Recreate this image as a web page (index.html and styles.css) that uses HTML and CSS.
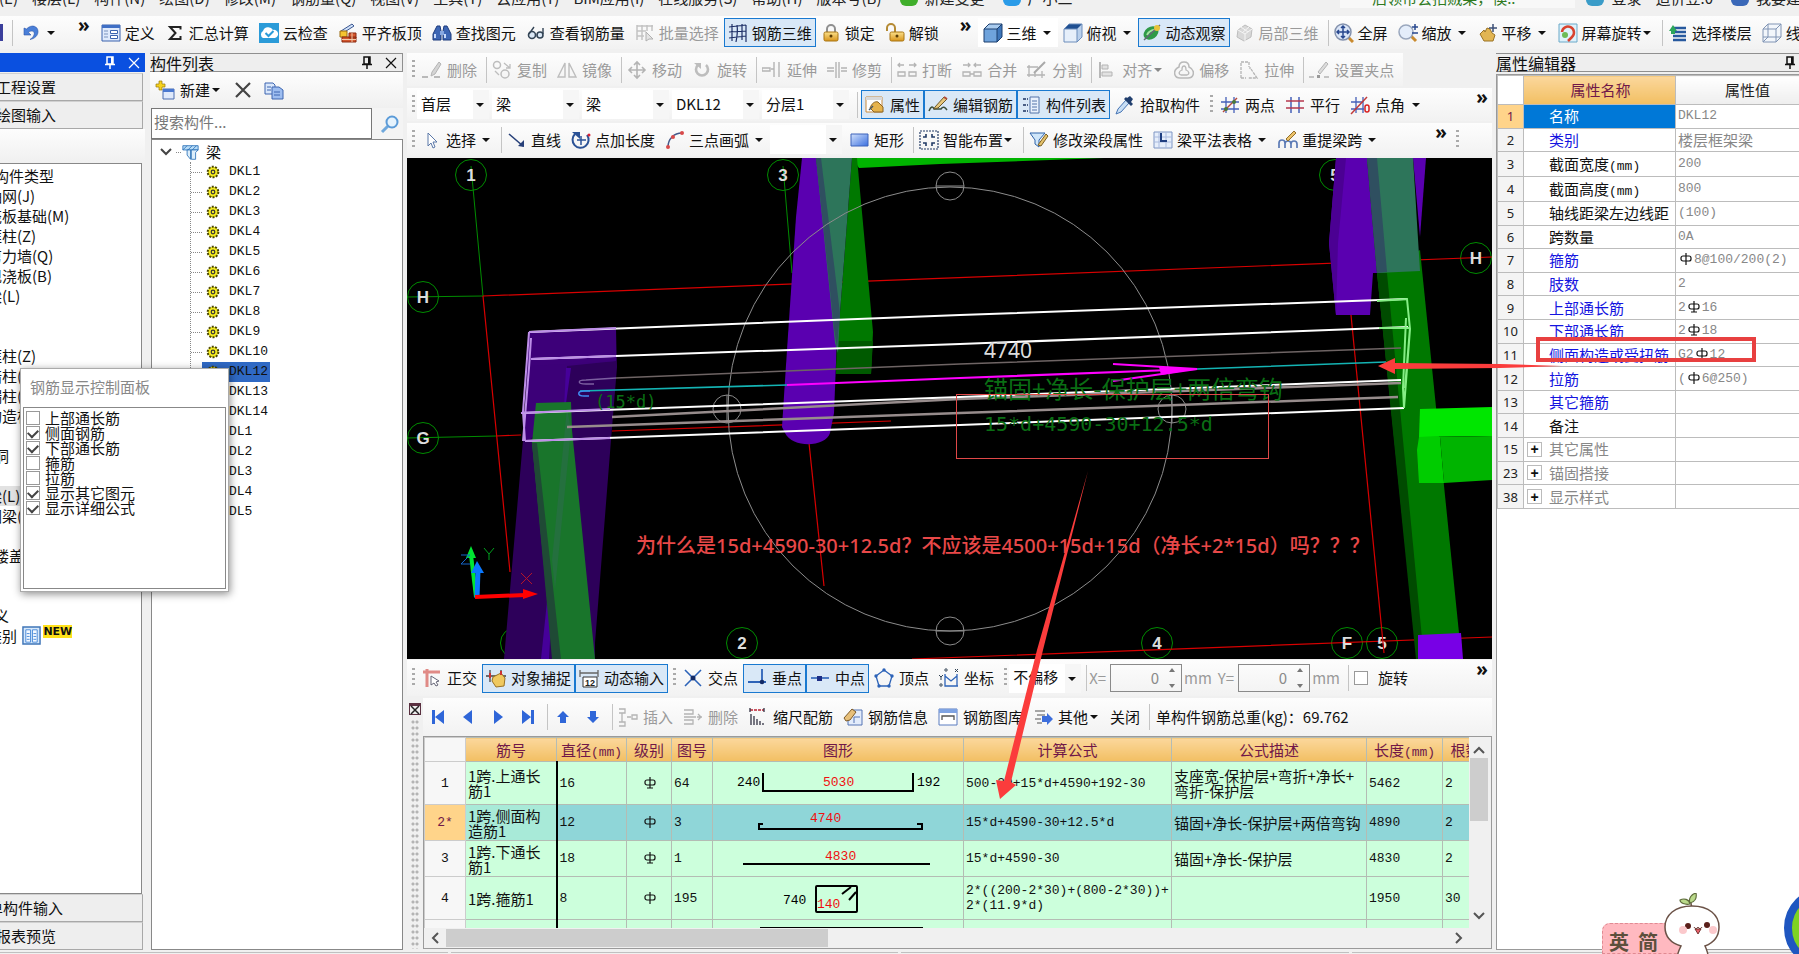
FILE: index.html
```html
<!DOCTYPE html>
<html lang="zh-CN">
<head>
<meta charset="utf-8">
<title>钢筋算量</title>
<link rel="stylesheet" href="styles.css">
</head>
<body>
<svg class="sprite" aria-hidden="true">
  <defs>
    <linearGradient id="gBlue" x1="0" y1="0" x2="1" y2="1"><stop offset="0" stop-color="#d3e2fb"/><stop offset="1" stop-color="#3a6fe0"/></linearGradient>
    <linearGradient id="gGold" x1="0" y1="0" x2="0" y2="1"><stop offset="0" stop-color="#fbe08a"/><stop offset="1" stop-color="#d8951c"/></linearGradient>
  </defs>
  <symbol id="undo" viewBox="0 0 20 20"><path d="M3 5v7h7l-2.500-2.500c3-3 7-1 5.500 2.500-.7 2-2 3-4 4.500 5-1 8-4 8-8 0-5-6-8-11.500-2.500z" fill="#4a7fd8" stroke="#2c55a8" stroke-width=".6"/></symbol>
  <symbol id="form" viewBox="0 0 20 20"><path d="M1 2h18v16H1z" fill="#dfeafc" stroke="#3b62ad"/><path d="M1 2h18v3H1z" fill="#3f6fc5"/><path d="M3 8h4M3 11h4M3 14h4" stroke="#7b93bd"/><path d="M9.500 7.500h7v3h-7zM9.500 12.500h7v3h-7z" fill="#fff" stroke="#3b62ad"/></symbol>
  <symbol id="sigma" viewBox="0 0 20 20"><path d="M15.500 6.500V4H5l5.500 6L5 16h10.500v-3" fill="none" stroke="#222" stroke-width="2"/></symbol>
  <symbol id="cloud" viewBox="0 0 20 20"><path d="M0 0h20v20H0z" fill="#2b9bd8"/><path d="M4 15a4 4 0 0 1 0-7 5.500 5.500 0 0 1 10-1 4 4 0 0 1 2 8z" fill="#fff"/><path d="M6.500 10l3 3 5-5" fill="none" stroke="#2b9bd8" stroke-width="2"/></symbol>
  <symbol id="slab" viewBox="0 0 20 20"><path d="M3 8L14 1l2 2L5 10z" fill="#cfe0f8" stroke="#3a5690"/><path d="M2 8h7v6H2z" fill="#f4c430" stroke="#9a6a10"/><path d="M4 14h14v5H4zM11 10h7v5h-7z" fill="#d4572e" stroke="#8a2a10"/><path d="M4 16.500h14M14 10v9" stroke="#f1c9a8"/></symbol>
  <symbol id="binoc" viewBox="0 0 20 20"><path d="M5 3h3l1 5v9H1v-6zM15 3h-3l-1 5v9h8v-6z" fill="#3d66b4" stroke="#1d3a7c"/><path d="M8 8h4v4H8z" fill="#88a8e0"/><path d="M3 11v4M13 11v4" stroke="#c8dafa" stroke-width="2"/></symbol>
  <symbol id="glasses" viewBox="0 0 20 20"><circle cx="6" cy="12" r="3.500" fill="#dbe8f5" stroke="#345" stroke-width="1.600"/><circle cx="14" cy="12" r="3" fill="#dbe8f5" stroke="#345" stroke-width="1.600"/><path d="M3 11l5-7M17 11V5" stroke="#345" stroke-width="1.400" fill="none"/></symbol>
  <symbol id="batch" viewBox="0 0 20 20"><path d="M2 2v15M2 3h16M2 8h9M2 13h7M7 2v15M12 2v6M17 2v6" stroke="#c3c3c3" stroke-width="1.500"/><path d="M11 9l7 7-4 0-3 2z" fill="#e4e4e4" stroke="#b0b0b0"/></symbol>
  <symbol id="mesh" viewBox="0 0 20 20"><path d="M4 1v17M9 2c1 6 0 12-1 17M14 1v16M18 2v17M1 4l17-2M1 9l17-1M1 15l17-2" stroke="#1e2f66" stroke-width="1.200" fill="none"/></symbol>
  <symbol id="lock" viewBox="0 0 20 20"><path d="M6 10V6a4 4 0 0 1 8 0v4" fill="none" stroke="#8f8f8f" stroke-width="2"/><rect x="3" y="9" width="14" height="9" rx="1.500" fill="url(#gGold)" stroke="#a87412"/><circle cx="10" cy="13" r="1.500" fill="#5b3d05"/></symbol>
  <symbol id="unlock" viewBox="0 0 20 20"><path d="M2 8V5a4 4 0 0 1 8 0v4" fill="none" stroke="#b58b35" stroke-width="2"/><rect x="5" y="9" width="14" height="9" rx="1.500" fill="url(#gGold)" stroke="#a87412"/><circle cx="12" cy="13" r="1.500" fill="#5b3d05"/></symbol>
  <symbol id="cube" viewBox="0 0 20 20"><path d="M1 6h13v13H1z" fill="#6fa3dc"/><path d="M1 6l5-5h13l-5 5z" fill="#a9cbee"/><path d="M14 6l5-5v13l-5 5z" fill="#3f77ba"/><path d="M1 6l5-5h13v13l-5 5H1zM1 6h13v13M14 6l5-5" fill="none" stroke="#1c3f6f"/></symbol>
  <symbol id="cubetop" viewBox="0 0 20 20"><path d="M1 6h13v13H1z" fill="#e6effa"/><path d="M1 6l5-5h13l-5 5z" fill="#1f4f91"/><path d="M14 6l5-5v13l-5 5z" fill="#b9d0ec"/><path d="M1 6l5-5h13v13l-5 5H1zM1 6h13v13M14 6l5-5" fill="none" stroke="#6c8dbb"/></symbol>
  <symbol id="cubewire" viewBox="0 0 20 20"><path d="M1 6l5-5h13v13l-5 5H1zM1 6h13v13M14 6l5-5M6 1v13H1M6 14h13M6 14l-5 5" fill="#f2f6fb" stroke="#8094b4"/></symbol>
  <symbol id="orbit" viewBox="0 0 20 20"><ellipse cx="9" cy="10" rx="8" ry="6" transform="rotate(-35 9 10)" fill="#2f9a48"/><path d="M5 12c2-4 5-5 8-5" stroke="#a4e2a0" stroke-width="2" fill="none"/><path d="M2 17L18 2" stroke="#667" stroke-width="1.500"/><circle cx="15" cy="5" r="3" fill="#e8c33a"/></symbol>
  <symbol id="orbitg" viewBox="0 0 20 20"><path d="M10 2l7 4-1 8-7 4-7-4 1-7z" fill="#d8d8d8" stroke="#bdbdbd"/><path d="M3 7l7 4 7-5M10 11v7M6 4l7 5M14 4l-7 6" stroke="#f6f6f6" fill="none"/></symbol>
  <symbol id="fit" viewBox="0 0 20 20"><path d="M14 14l5 5" stroke="#c98a2e" stroke-width="3"/><circle cx="9" cy="9" r="8" fill="#dbe6f8" stroke="#8391ad" stroke-width="1.500"/><path d="M9 3v12M3 9h12M7 5l2-2 2 2M7 13l2 2 2-2M5 7L3 9l2 2M13 7l2 2-2 2" stroke="#28488f" stroke-width="1.500" fill="none"/></symbol>
  <symbol id="zoom" viewBox="0 0 20 20"><path d="M12 12l6 6" stroke="#c98a2e" stroke-width="3"/><circle cx="8" cy="9" r="7" fill="#e4edfa" stroke="#9aa7bd" stroke-width="1.500"/><path d="M17 1v6M14 4h6M14 10h6" stroke="#28488f" stroke-width="1.500"/></symbol>
  <symbol id="pan" viewBox="0 0 20 20"><path d="M2 11l4-4 1 2 2-4 3 1 2 4 3 2-2 6H6z" fill="#e2b552" stroke="#9a7224"/><path d="M15 1v8M11 5h8" stroke="#3c4f76" stroke-width="1.500"/></symbol>
  <symbol id="rot" viewBox="0 0 20 20"><path d="M1 1h18v18H1z" fill="#dff1fb" stroke="#6aa9c8"/><path d="M4 9a6 6 0 1 1 10 5l-4 4" stroke="#d8432f" stroke-width="2.500" fill="none"/><circle cx="7" cy="12" r="3" fill="#6dbb56"/></symbol>
  <symbol id="floors" viewBox="0 0 20 20"><path d="M5 5h13M5 9h13M5 13h13M5 17h13" stroke="#27599e" stroke-width="2.400"/><path d="M1 8l4-6 4 6H7v3H3V8z" fill="#2ca65a"/></symbol>
  <symbol id="g-del" viewBox="0 0 20 20"><path d="M10 12l7-10 2 2-6 10-4 2z" fill="#d4d4d4" stroke="#b4b4b4"/><path d="M0 17h6M12 17h6" stroke="#b9b9b9" stroke-width="2"/></symbol>
  <symbol id="g-copy" viewBox="0 0 20 20"><circle cx="5" cy="5" r="3.500" fill="none" stroke="#bdbdbd" stroke-width="1.500"/><circle cx="13" cy="14" r="4" fill="none" stroke="#bdbdbd" stroke-width="1.500"/><path d="M12 3l6 5M18 4v4h-4M3 11l4 4" stroke="#bdbdbd" fill="none" stroke-width="1.300"/></symbol>
  <symbol id="g-mirror" viewBox="0 0 20 20"><path d="M8 3v14H1zM12 3v14h7z" fill="none" stroke="#bdbdbd" stroke-width="1.400"/></symbol>
  <symbol id="g-move" viewBox="0 0 20 20"><path d="M10 2v16M2 10h16M7 5l3-3 3 3M7 15l3 3 3-3M5 7l-3 3 3 3M15 7l3 3-3 3" stroke="#b4b4b4" stroke-width="1.600" fill="none"/></symbol>
  <symbol id="g-rotate" viewBox="0 0 20 20"><path d="M6 5a6 6 0 1 0 8 0" stroke="#bdbdbd" stroke-width="2.600" fill="none"/><path d="M2 3h7v6z" fill="#bdbdbd"/></symbol>
  <symbol id="g-extend" viewBox="0 0 20 20"><path d="M0 8h8v3H0zM12 2v15M17 2v15M9 9h3" stroke="#b4b4b4" stroke-width="1.400" fill="none"/></symbol>
  <symbol id="g-trim" viewBox="0 0 20 20"><path d="M0 8h7M0 11h7M14 8h6M14 11h6M9 2v16M12 2v16" stroke="#b4b4b4" stroke-width="1.400"/></symbol>
  <symbol id="g-break" viewBox="0 0 20 20"><path d="M1 5h6M12 5h7M3 3L1 5l2 2M17 3l2 2-2 2M1 12h7v4H1zM12 12h7v4h-7z" stroke="#b4b4b4" stroke-width="1.300" fill="none"/></symbol>
  <symbol id="g-join" viewBox="0 0 20 20"><path d="M1 5h7M12 5h7M6 3l2 2-2 2M14 3l-2 2 2 2M1 12h7v4H1zM12 12h7v4h-7zM8 14h4" stroke="#b4b4b4" stroke-width="1.300" fill="none"/></symbol>
  <symbol id="g-split" viewBox="0 0 20 20"><path d="M0 7h11M0 15h18M2 5v12M8 13v4M15 11v7" stroke="#b4b4b4" stroke-width="1.300"/><path d="M7 13L18 2" stroke="#a8a8a8" stroke-width="2"/></symbol>
  <symbol id="g-align" viewBox="0 0 20 20"><path d="M3 2v16" stroke="#a8a8a8" stroke-width="1.600"/><path d="M5 5h6v4H5zM5 12h10v4H5z" fill="#e2e2e2" stroke="#b4b4b4"/></symbol>
  <symbol id="g-offset" viewBox="0 0 20 20"><path d="M10 2c3 0 5 2 5 5 4 2 5 5 4 8-1 3-3 3-5 3H6c-2 0-4 0-5-3-1-3 0-6 4-8 0-3 2-5 5-5z" fill="none" stroke="#b9b9b9" stroke-width="1.500"/><path d="M10 6c2 0 2 2 2 4 3 1 4 4 1 5H7c-3-1-2-4 1-5 0-2 0-4 2-4z" fill="none" stroke="#b9b9b9" stroke-width="1.300"/></symbol>
  <symbol id="g-stretch" viewBox="0 0 20 20"><path d="M2 18V2h8v5M2 18h5M12 9l6 9H9M11 7v2" fill="none" stroke="#b4b4b4" stroke-width="1.300" stroke-dasharray="3 1"/></symbol>
  <symbol id="g-grip" viewBox="0 0 20 20"><path d="M0 17h5M15 17h5" stroke="#b4b4b4" stroke-width="1.500"/><path d="M9 12l8-10 2 2-8 10z" fill="#dcdcdc" stroke="#b4b4b4"/><path d="M8 15h3v3H8z" fill="#999"/></symbol>
  <symbol id="prop" viewBox="0 0 20 20"><path d="M1 2h16v15H1z" fill="#fff" stroke="#c98a3a"/><path d="M1 2h16v3H1z" fill="#d9d9d9"/><path d="M5 13c2-5 5-7 8-6l5 5v5H9z" fill="#e6b34c" stroke="#8a6222"/><path d="M4 15l4-4" stroke="#456" stroke-width="1.500"/></symbol>
  <symbol id="editbar" viewBox="0 0 20 20"><path d="M1 16c2-5 4-5 5-2h7c2-3 4-2 6 1" fill="none" stroke="#3c4f3c" stroke-width="1.500"/><path d="M7 12L16 2l3 2-9 9-4 1z" fill="#e7c77c" stroke="#6d5a2a"/><path d="M16 2l3 2" stroke="#b34a3a" stroke-width="2"/></symbol>
  <symbol id="list" viewBox="0 0 20 20"><path d="M9 2h9v16H9z" fill="#e9f1fc" stroke="#5272a8"/><path d="M11 6h5M11 9h5M11 12h5M11 15h5" stroke="#5272a8"/><path d="M2 4h3M2 10h3M2 16h3M6 4h1M6 10h1M6 16h1" stroke="#4a5f86" stroke-width="2"/></symbol>
  <symbol id="dropper" viewBox="0 0 20 20"><path d="M11 5L3 14l-2 5 5-2 8-9z" fill="#c9dff5" stroke="#4775b4"/><path d="M9 4l7 7 2-2-2-2 2-3-3-3-3 2-1-1z" fill="#22406f"/></symbol>
  <symbol id="twopt" viewBox="0 0 20 20"><path d="M6 2v16M14 2v16M1 7h18M1 14h18" stroke="#4660b8" stroke-width="1.300"/><path d="M3 17L17 3" stroke="#b5483e" stroke-width="1.500"/><circle cx="6" cy="14" r="2" fill="#477a3c"/><circle cx="14" cy="7" r="2" fill="#477a3c"/></symbol>
  <symbol id="para" viewBox="0 0 20 20"><path d="M6 2v16M14 2v16" stroke="#4660b8" stroke-width="1.500"/><path d="M1 6h18M1 13h18" stroke="#b5384e" stroke-width="1.500"/></symbol>
  <symbol id="angle" viewBox="0 0 20 20"><path d="M6 2v16M13 2v16M1 7h12M1 14h13" stroke="#4660b8" stroke-width="1.300"/><path d="M1 19L17 2" stroke="#c23a3a" stroke-width="1.500"/><rect x="15" y="10" width="4" height="7" rx="2" fill="none" stroke="#d82020" stroke-width="1.500"/></symbol>
  <symbol id="cursor" viewBox="0 0 20 20"><path d="M6 3v13l3-3 2 5 2-1-2-5h4z" fill="#fff" stroke="#5b78a8"/></symbol>
  <symbol id="line" viewBox="0 0 20 20"><path d="M2 4l14 12" stroke="#263f78" stroke-width="1.600"/><path d="M17 17v-7l-6 6z" fill="#263f78"/></symbol>
  <symbol id="ptlen" viewBox="0 0 20 20"><path d="M4 4a8 8 0 1 0 12 1" stroke="#2b5296" stroke-width="2" fill="none"/><path d="M1 2h8v7z" fill="#2b5296"/><path d="M10 6v9M6 10h9" stroke="#2b5296" stroke-width="1.500"/><circle cx="18" cy="5" r="1.500" fill="#d23"/></symbol>
  <symbol id="arc" viewBox="0 0 20 20"><path d="M3 17C3 9 9 3 17 3" stroke="#44598a" stroke-width="1.500" fill="none"/><circle cx="3" cy="17" r="2" fill="#d84a4a"/><circle cx="8" cy="7" r="2" fill="#d84a4a"/><circle cx="17" cy="3" r="2" fill="#d84a4a"/></symbol>
  <symbol id="rect" viewBox="0 0 20 20"><path d="M1 4h17v12H1z" fill="url(#gBlue)" stroke="#3c63ba"/></symbol>
  <symbol id="smart" viewBox="0 0 20 20"><path d="M1 1h18v18H1z" fill="none" stroke="#223b66" stroke-width="1.200" stroke-dasharray="2 1"/><path d="M4 7h3V4M13 4v3h3M4 13h3v3M13 16v-3h3" fill="none" stroke="#223b66" stroke-width="1.600"/></symbol>
  <symbol id="segprop" viewBox="0 0 20 20"><path d="M1 3h15l-6 7v7l-4-3v-4z" fill="#cfe6fa" stroke="#2f62a8"/><path d="M9 15L17 4l2 2-7 10z" fill="#e5c26b" stroke="#7a5f22"/></symbol>
  <symbol id="grid" viewBox="0 0 20 20"><path d="M1 2h18v16H1z" fill="#e6eefb" stroke="#7e96c4"/><path d="M1 7h18M1 12h18M6 2v16M13 2v16" stroke="#a9bade"/><path d="M8 3v8h6" stroke="#1f3e80" stroke-width="2" fill="none"/></symbol>
  <symbol id="respan" viewBox="0 0 20 20"><path d="M1 18v-5c0-4 6-4 6 0v5M7 14c0-4 6-4 6 0v4M13 14c0-4 6-4 6 0v4" fill="none" stroke="#5b7ab5" stroke-width="1.700"/><path d="M8 9l8-8 2 2-8 8z" fill="#ecc26a" stroke="#93702a"/></symbol>
  <symbol id="ortho" viewBox="0 0 20 20"><path d="M1 4h17M5 1v18" stroke="#e08a86" stroke-width="3"/><path d="M9 8v9l3-2 2 3 2-1-2-3 3-1z" fill="#fff" stroke="#667"/></symbol>
  <symbol id="snap" viewBox="0 0 20 20"><path d="M0 8h20M4 2v12M15 2v12" stroke="#444" stroke-width="1.300"/><path d="M7 9l8-4 4 5-1 8-8 1-4-6z" fill="#efc960" stroke="#9a7224"/><path d="M4 5v5M15 3v4" stroke="#c33" stroke-width="2"/></symbol>
  <symbol id="dyn" viewBox="0 0 20 20"><path d="M1 2v7M19 2v7M1 5h18" stroke="#666" stroke-width="1.300"/><path d="M4 9h14v10H4z" fill="#fff" stroke="#333"/><text x="11" y="18" text-anchor="middle" font-size="9" font-weight="700" font-family="Liberation Sans, sans-serif" fill="#222">12</text></symbol>
  <symbol id="cross" viewBox="0 0 20 20"><path d="M2 2l16 16M18 2L2 18" stroke="#2d63b8" stroke-width="1.600"/><circle cx="10" cy="10" r="2.500" fill="#122a66"/></symbol>
  <symbol id="perp" viewBox="0 0 20 20"><path d="M1 14h18M15 1v13" stroke="#2d63b8" stroke-width="1.800"/><circle cx="15" cy="14" r="2.300" fill="#122a66"/></symbol>
  <symbol id="mid" viewBox="0 0 20 20"><path d="M1 10h18" stroke="#2d63b8" stroke-width="1.600"/><rect x="7" y="8" width="5" height="5" fill="#1d2f86"/></symbol>
  <symbol id="vertex" viewBox="0 0 20 20"><path d="M10 2l8 6-3 10H5L2 8z" fill="none" stroke="#2d63b8" stroke-width="1.300"/><g fill="#2d63b8"><circle cx="10" cy="2" r="1.700"/><circle cx="18" cy="8" r="1.700"/><circle cx="15" cy="18" r="1.700"/><circle cx="5" cy="18" r="1.700"/><circle cx="2" cy="8" r="1.700"/></g></symbol>
  <symbol id="coord" viewBox="0 0 20 20"><path d="M6 6v12h13M6 8l6 5 6-5M18 6v12" fill="none" stroke="#2d63b8" stroke-width="1.300"/><g fill="none" stroke="#345"><circle cx="7" cy="2" r="1.200"/><circle cx="2" cy="17" r="1.200"/></g><path d="M0 7l2 2v3M4 7L2 9M16 1l3 3M19 1l-3 3" stroke="#345" fill="none"/></symbol>
  <symbol id="first" viewBox="0 0 20 20"><path d="M4 3h3v14H4zM16 3v14l-9-7z" fill="#2f66d8"/></symbol>
  <symbol id="prev" viewBox="0 0 20 20"><path d="M14 3v14l-9-7z" fill="#2f66d8"/></symbol>
  <symbol id="next" viewBox="0 0 20 20"><path d="M6 3v14l9-7z" fill="#2f66d8"/></symbol>
  <symbol id="last" viewBox="0 0 20 20"><path d="M13 3h3v14h-3zM4 3v14l9-7z" fill="#2f66d8"/></symbol>
  <symbol id="up" viewBox="0 0 20 20"><path d="M10 4l6 6h-3v6H7v-6H4z" fill="#2f66d8"/></symbol>
  <symbol id="down" viewBox="0 0 20 20"><path d="M10 16l6-6h-3V4H7v6H4z" fill="#2f66d8"/></symbol>
  <symbol id="g-ins" viewBox="0 0 20 20"><path d="M1 2h6v4H1M1 15h6v4H1M4 6v9M9 10h4M14 8h5v4h-5z" fill="none" stroke="#b4b4b4" stroke-width="1.300"/></symbol>
  <symbol id="g-rem" viewBox="0 0 20 20"><path d="M1 3h9v4H1M1 13h9v4H1M1 10h12M14 10h5M15 7l3 3-3 3" fill="none" stroke="#b4b4b4" stroke-width="1.300"/></symbol>
  <symbol id="scale" viewBox="0 0 20 20"><path d="M2 3h14" stroke="#b23" stroke-width="1.300" stroke-dasharray="3 1"/><path d="M2 1v4M16 1v4M3 7v11M6 9v9M9 12v6M12 14v4M15 16v2" stroke="#334" stroke-width="1.300"/></symbol>
  <symbol id="barinfo" viewBox="0 0 20 20"><path d="M9 3h10v15H5v-5z" fill="#e3ecfb" stroke="#5474b4"/><path d="M11 10h6M11 10v6" stroke="#5474b4"/><path d="M1 11L9 2l4 3-6 8-4 1z" fill="#e7c07a" stroke="#7c5a28"/></symbol>
  <symbol id="barlib" viewBox="0 0 20 20"><path d="M1 2h18v16H1z" fill="#fff" stroke="#5a7cc0"/><path d="M1 2h18v4H1z" fill="#7fa3e2"/><path d="M4 13V9h12v4" fill="none" stroke="#555" stroke-width="1.300"/></symbol>
  <symbol id="other" viewBox="0 0 20 20"><path d="M2 4h10M4 8h8M2 12h6M4 16h5" stroke="#555" stroke-width="1.200"/><path d="M9 9h5V6l6 6-6 6v-3H9z" fill="#3d6edc"/></symbol>
  <symbol id="new" viewBox="0 0 20 20"><path d="M8 9h11v10H8z" fill="#dfe9fb" stroke="#4a6cb0"/><path d="M8 9h11v3H8z" fill="#4a78d0"/><path d="M4 1h3v3h3v3H7v3H4V7H1V4h3z" fill="#f6d21e" stroke="#97790c" stroke-width=".7"/></symbol>
  <symbol id="delx" viewBox="0 0 20 20"><path d="M3 3l14 14M17 3L3 17" stroke="#444" stroke-width="2.200"/></symbol>
  <symbol id="copy" viewBox="0 0 20 20"><path d="M1 3h8l2 2v9H1z" fill="#d9e7fb" stroke="#3c65b0"/><path d="M8 7h7l4 3v9H8z" fill="#9dbdf0" stroke="#3c65b0"/><path d="M3 7h4M3 10h4M10 12h6M10 15h6" stroke="#3c65b0"/></symbol>
  <symbol id="search" viewBox="0 0 20 20"><path d="M8 12l-6 6" stroke="#6fa8dc" stroke-width="3"/><circle cx="12" cy="8" r="5.500" fill="#e6f3fd" stroke="#5b9bd8" stroke-width="2"/></symbol>
  <symbol id="pin" viewBox="0 0 12 14"><path d="M3 1h6v7H3zM1 8.500h10M6 9v4" fill="none" stroke="currentColor" stroke-width="1.500"/><path d="M7 1h2v7H7z" fill="currentColor"/></symbol>
  <symbol id="x" viewBox="0 0 12 12"><path d="M1 1l10 10M11 1L1 11" stroke="currentColor" stroke-width="1.200"/></symbol>
  <symbol id="beam" viewBox="0 0 20 20"><path d="M1 2h18v5H1z" fill="#b7dcf8" stroke="#2d72b8"/><path d="M1 7l5-5M6 8l6-6M12 7l5-5" stroke="#2d72b8"/><path d="M6 7h4v11l-4-5zM11 7h8l-3 3v8h-5z" fill="#dceefb" stroke="#2d72b8"/></symbol>
  <symbol id="gear" viewBox="0 0 14 14"><circle cx="7" cy="7" r="5.300" fill="#e8e018" stroke="#4a4600" stroke-width="2" stroke-dasharray="2 1.300"/><circle cx="7" cy="7" r="4" fill="#f2ea20"/><circle cx="7" cy="7" r="1.800" fill="none" stroke="#333" stroke-width="1.200"/></symbol>
  <symbol id="r1" viewBox="0 0 12 12"><rect x="1" y="3" width="10" height="5" rx="2" fill="none" stroke="currentColor" stroke-width="1.200"/><path d="M6 0v12" stroke="currentColor" stroke-width="1.200"/></symbol>
  <symbol id="r3" viewBox="0 0 12 12"><rect x="1" y="3" width="10" height="5" rx="2" fill="none" stroke="currentColor" stroke-width="1.200"/><path d="M6 0v11M3 11h6" fill="none" stroke="currentColor" stroke-width="1.200"/></symbol>
</svg>

<div class="app">
  <nav class="menu">
    <div class="menu-line">
      <a href="#">编辑(E)</a><a href="#">楼层(L)</a><a href="#">构件(N)</a><a href="#">绘图(D)</a><a href="#">修改(M)</a><a href="#">钢筋量(Q)</a><a href="#">视图(V)</a><a href="#">工具(T)</a><a href="#">云应用(Y)</a><a href="#">BIM应用(I)</a><a href="#">在线服务(S)</a><a href="#">帮助(H)</a><a href="#">版本号(B)</a>
      <a href="#"><i class="dot green"></i>新建变更</a><a href="#"><i class="dot blue"></i>广小二</a>
      <span class="notice">后领币会招贼果，懊..</span>
      <span class="account"><a href="#"><i class="dot sky"></i>登录</a><a href="#">造价豆:0</a><a href="#"><i class="dot navy"></i>我要建议</a></span>
    </div>
  </nav>

  <div class="bar top close-set">
    <i class="save"></i><i class="sep"></i>
    <button class="t undo" aria-label="撤销"><svg class="i"><use href="#undo"/></svg><i class="caret"></i></button>
    <span class="more lead">»</span>
    <button class="t"><svg class="i"><use href="#form"/></svg>定义</button>
    <button class="t"><svg class="i"><use href="#sigma"/></svg>汇总计算</button>
    <button class="t"><svg class="i"><use href="#cloud"/></svg>云检查</button>
    <button class="t"><svg class="i"><use href="#slab"/></svg>平齐板顶</button>
    <button class="t"><svg class="i"><use href="#binoc"/></svg>查找图元</button>
    <button class="t"><svg class="i"><use href="#glasses"/></svg>查看钢筋量</button>
    <button class="t off"><svg class="i"><use href="#batch"/></svg>批量选择</button>
    <button class="t on"><svg class="i"><use href="#mesh"/></svg>钢筋三维</button>
    <button class="t"><svg class="i"><use href="#lock"/></svg>锁定</button>
    <button class="t"><svg class="i"><use href="#unlock"/></svg>解锁</button>
    <span class="more mid">»</span>
    <button class="t white"><svg class="i"><use href="#cube"/></svg>三维<i class="caret"></i></button>
    <button class="t"><svg class="i"><use href="#cubetop"/></svg>俯视<i class="caret"></i></button>
    <button class="t on"><svg class="i"><use href="#orbit"/></svg>动态观察</button>
    <button class="t off"><svg class="i"><use href="#orbitg"/></svg>局部三维</button>
    <i class="sep"></i>
    <button class="t"><svg class="i"><use href="#fit"/></svg>全屏</button>
    <button class="t"><svg class="i"><use href="#zoom"/></svg>缩放<i class="caret"></i></button>
    <button class="t"><svg class="i"><use href="#pan"/></svg>平移<i class="caret"></i></button>
    <button class="t"><svg class="i"><use href="#rot"/></svg>屏幕旋转<i class="caret tight"></i></button>
    <i class="sep"></i>
    <button class="t"><svg class="i"><use href="#floors"/></svg>选择楼层</button>
    <button class="t"><svg class="i"><use href="#cubewire"/></svg>线框</button>
  </div>

  <div class="work">
    <aside class="nav">
      <header class="nav-head"><svg class="pin"><use href="#pin"/></svg><svg class="close"><use href="#x"/></svg></header>
      <button class="nav-btn">工程设置</button>
      <button class="nav-btn">绘图输入</button>
      <div class="nav-strip"></div>
      <ul class="nav-list">
        <li class="in1">构件类型</li><li>轴网(J)</li><li>筏板基础(M)</li><li>框柱(Z)</li><li>剪力墙(Q)</li><li>现浇板(B)</li><li>梁(L)</li>
        <li></li><li></li><li>框柱(Z)</li><li>暗柱(Z)</li><li>端柱(Z)</li><li>构造柱(Z)</li><li></li><li class="in1">洞</li><li></li>
        <li class="hot">梁(L)</li><li>圈梁(E)</li><li></li><li class="in1">楼盖</li><li></li><li></li><li class="in1">义</li>
        <li>类别 <svg class="book" viewBox="0 0 20 20"><path d="M1 1h18v18H1z" fill="#d6e8fb" stroke="#3f75b8" stroke-width="1.500"/><path d="M4 4h5v13H4zM11 4h5v13h-5z" fill="#f4f9ff" stroke="#4a8ad8"/><path d="M5 8h3M12 8h3M5 11h3M12 11h3M5 14h3M12 14h3" stroke="#4a8ad8"/></svg><b class="new">NEW</b></li>
      </ul>
      <button class="nav-btn deep">单构件输入</button>
      <button class="nav-btn">报表预览</button>
    </aside>

    <section class="comp">
      <header class="head">构件列表<svg class="pin"><use href="#pin"/></svg><svg class="close"><use href="#x"/></svg></header>
      <div class="comp-bar">
        <button class="t"><svg class="i"><use href="#new"/></svg>新建<i class="caret tight"></i></button>
        <button class="t icon" aria-label="删除"><svg class="i"><use href="#delx"/></svg></button>
        <button class="t icon" aria-label="复制"><svg class="i"><use href="#copy"/></svg></button>
      </div>
      <div class="find"><input type="text" placeholder="搜索构件..." aria-label="搜索构件"><button aria-label="搜索"><svg class="i"><use href="#search"/></svg></button></div>
      <div class="tree">
        <div class="root"><svg class="chev" viewBox="0 0 12 8"><path d="M1 1l5 5 5-5" fill="none" stroke="#444" stroke-width="2"/></svg><i class="stub"></i><svg class="i16"><use href="#beam"/></svg>梁</div>
        <ul>
          <li><span><svg><use href="#gear"/></svg>DKL1</span></li><li><span><svg><use href="#gear"/></svg>DKL2</span></li><li><span><svg><use href="#gear"/></svg>DKL3</span></li><li><span><svg><use href="#gear"/></svg>DKL4</span></li><li><span><svg><use href="#gear"/></svg>DKL5</span></li><li><span><svg><use href="#gear"/></svg>DKL6</span></li><li><span><svg><use href="#gear"/></svg>DKL7</span></li><li><span><svg><use href="#gear"/></svg>DKL8</span></li><li><span><svg><use href="#gear"/></svg>DKL9</span></li><li><span><svg><use href="#gear"/></svg>DKL10</span></li><li class="sel"><span><svg><use href="#gear"/></svg>DKL12</span></li><li><span><svg><use href="#gear"/></svg>DKL13</span></li><li><span><svg><use href="#gear"/></svg>DKL14</span></li><li><span><svg><use href="#gear"/></svg>DL1</span></li><li><span><svg><use href="#gear"/></svg>DL2</span></li><li><span><svg><use href="#gear"/></svg>DL3</span></li><li><span><svg><use href="#gear"/></svg>DL4</span></li><li><span><svg><use href="#gear"/></svg>DL5</span></li>
        </ul>
      </div>
    </section>

    <main class="center">
      <div class="bar fit">
        <i class="grip"></i>
        <button class="t off"><svg class="i"><use href="#g-del"/></svg>删除</button><i class="sep"></i>
        <button class="t off"><svg class="i"><use href="#g-copy"/></svg>复制</button>
        <button class="t off"><svg class="i"><use href="#g-mirror"/></svg>镜像</button><i class="sep"></i>
        <button class="t off"><svg class="i"><use href="#g-move"/></svg>移动</button>
        <button class="t off"><svg class="i"><use href="#g-rotate"/></svg>旋转</button><i class="sep"></i>
        <button class="t off"><svg class="i"><use href="#g-extend"/></svg>延伸</button>
        <button class="t off"><svg class="i"><use href="#g-trim"/></svg>修剪</button><i class="sep"></i>
        <button class="t off"><svg class="i"><use href="#g-break"/></svg>打断</button>
        <button class="t off"><svg class="i"><use href="#g-join"/></svg>合并</button>
        <button class="t off"><svg class="i"><use href="#g-split"/></svg>分割</button><i class="sep"></i>
        <button class="t off"><svg class="i"><use href="#g-align"/></svg>对齐<i class="caret tight"></i></button>
        <button class="t off"><svg class="i"><use href="#g-offset"/></svg>偏移</button>
        <button class="t off"><svg class="i"><use href="#g-stretch"/></svg>拉伸</button><i class="sep"></i>
        <button class="t off"><svg class="i"><use href="#g-grip"/></svg>设置夹点</button>
      </div>
      <div class="bar">
        <i class="grip"></i>
        <span class="combo short"><select aria-label="楼层"><option>首层</option></select></span>
        <span class="combo"><select aria-label="构件大类"><option>梁</option></select></span>
        <span class="combo"><select aria-label="构件类型"><option>梁</option></select></span>
        <span class="combo"><select aria-label="构件"><option>DKL12</option></select></span>
        <span class="combo"><select aria-label="分层"><option>分层1</option></select></span>
        <i class="sep wide"></i>
        <button class="t on"><svg class="i"><use href="#prop"/></svg>属性</button>
        <button class="t on"><svg class="i"><use href="#editbar"/></svg>编辑钢筋</button>
        <button class="t on"><svg class="i"><use href="#list"/></svg>构件列表</button>
        <button class="t"><svg class="i"><use href="#dropper"/></svg>拾取构件</button>
        <i class="grip"></i>
        <button class="t"><svg class="i"><use href="#twopt"/></svg>两点</button>
        <button class="t"><svg class="i"><use href="#para"/></svg>平行</button>
        <button class="t"><svg class="i"><use href="#angle"/></svg>点角<i class="caret"></i></button>
        <span class="more end">»</span>
      </div>
      <div class="bar close-set">
        <i class="grip"></i>
        <button class="t"><svg class="i"><use href="#cursor"/></svg>选择<i class="caret"></i></button><i class="sep"></i>
        <button class="t"><svg class="i"><use href="#line"/></svg>直线</button>
        <button class="t"><svg class="i"><use href="#ptlen"/></svg>点加长度</button>
        <button class="t"><svg class="i"><use href="#arc"/></svg>三点画弧<i class="caret"></i></button>
        <span class="combo short"><select aria-label="画弧参数"><option></option></select></span>
        <button class="t"><svg class="i"><use href="#rect"/></svg>矩形</button><i class="sep"></i>
        <button class="t"><svg class="i"><use href="#smart"/></svg>智能布置<i class="caret tight"></i></button><i class="sep"></i>
        <button class="t"><svg class="i"><use href="#segprop"/></svg>修改梁段属性</button>
        <button class="t"><svg class="i"><use href="#grid"/></svg>梁平法表格<i class="caret"></i></button>
        <button class="t"><svg class="i"><use href="#respan"/></svg>重提梁跨<i class="caret"></i></button>
        <span class="more far">»</span><i class="grip"></i>
      </div>

      <div class="view">
        <svg viewBox="0 0 1085 501" preserveAspectRatio="xMidYMid slice">
          <path d="M0 0h1085v501H0z" fill="#000"/>
          <g fill="none" stroke="#008c00">
            <circle cx="64" cy="17" r="15.500"/><circle cx="376" cy="17" r="15.500"/><circle cx="928" cy="17" r="15.500"/>
            <circle cx="16" cy="139" r="15.500"/><circle cx="16" cy="280" r="15.500"/><circle cx="1069" cy="100" r="15.500"/>
            <circle cx="109" cy="485" r="15.500"/><circle cx="335" cy="485" r="15.500"/><circle cx="750" cy="485" r="15.500"/><circle cx="940" cy="485" r="15.500"/><circle cx="975" cy="485" r="15.500"/>
            <path d="M64 8l12 130L0 139M0 280l89-2M376 8l9 107"/>
          </g>
          <path d="M76 138L1085 99M76 138L103 414M89 278l25-1M205 273l279-10M505 501l580-22" fill="none" stroke="#d80000" stroke-width="1.200"/>
          <g class="axis">
            <text x="64" y="17">1</text><text x="376" y="17">3</text><text x="928" y="17">5</text><text x="16" y="139">H</text><text x="16" y="280">G</text><text x="1069" y="100">H</text><text x="335" y="485">2</text><text x="750" y="485">4</text><text x="940" y="485">F</text><text x="975" y="485">5</text>
          </g>
          <path d="M402 285l15 143" stroke="#d80000" stroke-width="1.200"/>
          <path d="M445 0h252l-164 6-81 4z" fill="#00b400"/>
          <path d="M122 174l87-4 1 39-6 73-16 203v16H97l19-219z" fill="#2d005a"/>
          <path d="M122 174l87-4v33l-49 5-1 40-37 34-5 0z" fill="#3c0078"/>
          <path d="M122 174l87-4v33l-85 5z" fill="#3d0079"/>
          <path d="M154 280l10-70-5 0-5 100-20 191h8z" fill="#46009a"/>
          <path d="M129 245l35-1 1 28 23 229h-42L125 285z" fill="#19752b"/>
          <path d="M125 285l5 0 24 216h-9z" fill="#1f4a35"/>
          <path d="M160 250l4 22-16 160-3-30z" fill="#24703e"/>
          <path d="M395 0h14l22 155-4 100-4 20c-4 14-37 16-45 0l-3-6 5-77 9-133z" fill="#5a00b0"/>
          <path d="M445 0h5l16 174-2 42h-35l4-61z" fill="#007800"/>
          <path d="M430 183h36l-2 33h-35z" fill="#005a00"/>
          <path d="M409 0h36l-12 155-2 40-3-10z" fill="#2d755a"/>
          <path d="M409 0h5l19 155-3 35-3-20z" fill="#2f4f60"/>
          <path d="M1006 0h13l-6 79z" fill="#5a00b0"/>
          <path d="M929 0h31l10 115h-4l-3 42h-34l-7-72z" fill="#5a00b0"/><path d="M929 0h10l-8 85-2 72-7-72z" fill="#4b0093"/>
          <path d="M970 115l43-23 39 383-2 26h-40z" fill="#007800"/>
          <path d="M970 115h10l37 386h-8z" fill="#004b00"/>
          <path d="M960 0h46l7 113-43 2z" fill="#2d755a"/><path d="M960 0h10l10 114-10 1z" fill="#2f4f60"/>
          <path d="M1013 251l72-2v29l-73 1z" fill="#00e600"/><path d="M1012 279h21l4 46h-25l-2-33z" fill="#00cc00"/><path d="M1033 279l52-1v44l-48 3z" fill="#00b400"/>
          <path d="M1011 477l43-2 2 26h-45z" fill="#7800e6"/>
          <path d="M944 157l33 338" stroke="#d80000" stroke-width="1.200"/>
          <g fill="none" stroke="#8c8c8c"><circle cx="543" cy="251" r="222"/><circle cx="543" cy="28" r="14"/><circle cx="543" cy="473" r="14"/><circle cx="320" cy="251" r="14"/><circle cx="765" cy="251" r="14"/><path d="M529 28h28M529 473h28M320 237v28M765 237v28"/></g>
          <g fill="none">
            <path d="M209 220L553 206L994 190" stroke="#6e6464" stroke-width="1.500"/><path d="M209 220l-30 2c-9 0-9 4 0 4h8" stroke="#7c5fa0" stroke-width="1.300"/>
            <path d="M173 233l207-6M790 211l189-7" stroke="#14b4b4" stroke-width="1.600"/><path d="M183 233h-6c-7 0-7 5 0 5h5" stroke="#3f8cf0" stroke-width="1.500"/>
            <path d="M160 269L553 255L991 239M205 259L553 241L994 225" stroke="#978c8c" stroke-width="2.500"/>
            <path d="M122 174L553 157L1000 141M124 201L553 186L1001 169M114 255L553 239L994 222M118 283L553 267L997 250" stroke="#fff" stroke-width="2"/>
            <path d="M122 174l-6 80 2 29M124 180l-2 30-6 73M122 174l87-4M124 201l85-3M114 255l89-4M118 283l85-3" stroke="#bd8ee8" stroke-width="2"/>
            <path d="M970 143l30-2 3 30-6 79M999 160l-3 70 1 20M1003 170l-5 60M972 170h30" stroke="#85ee85" stroke-width="2"/>
            <path d="M380 227L553 220L790 211" stroke="#f0f" stroke-width="2.200"/><path d="M706 206l84 5-84 12" stroke="#f0f" stroke-width="2.200"/>
          </g>
          <path d="M752 209l38 2-36 6z" fill="#f0f"/>
          <text x="577" y="192" class="dim">4740</text>
          <text x="188" y="244" class="formula small">(15*d)</text>
          <text x="577" y="229" class="desc">锚固+净长-保护层+两倍弯钩</text>
          <text x="577" y="266" class="formula">15*d+4590-30+12.5*d</text>
          <path d="M69 439L64 397" stroke="#00e632" stroke-width="4"/><path d="M64 388l5 12h-10z" fill="#00e632"/>
          <path d="M70 440l1-28" stroke="#0a78ff" stroke-width="5"/><path d="M70 403l7 12H64z" fill="#0a78ff"/>
          <path d="M68 439l50-2" stroke="#f00" stroke-width="4"/><path d="M131 436l-15-5v10z" fill="#f00"/>
          <path d="M77 390l5 6 5-6M82 396v6" stroke="#00a01e" fill="none"/><path d="M54 397h9l-9 9h9" stroke="#1464c8" fill="none"/><path d="M114 415l11 11M125 415l-11 11" stroke="#b41428" fill="none"/>
        </svg>
      </div>

      <div class="bar snap">
        <i class="grip"></i>
        <button class="t"><svg class="i"><use href="#ortho"/></svg>正交</button>
        <button class="t on"><svg class="i"><use href="#snap"/></svg>对象捕捉</button>
        <button class="t on"><svg class="i"><use href="#dyn"/></svg>动态输入</button>
        <i class="grip"></i>
        <button class="t"><svg class="i"><use href="#cross"/></svg>交点</button>
        <button class="t on"><svg class="i"><use href="#perp"/></svg>垂点</button>
        <button class="t on"><svg class="i"><use href="#mid"/></svg>中点</button>
        <button class="t"><svg class="i"><use href="#vertex"/></svg>顶点</button>
        <button class="t"><svg class="i"><use href="#coord"/></svg>坐标</button>
        <i class="grip"></i>
        <span class="combo short"><select aria-label="偏移方式"><option>不偏移</option></select></span><i class="sep flush"></i>
        <label class="off" for="ox">X=</label><span class="num"><input id="ox" type="text" value="0"><i></i></span><span class="off unit">mm</span>
        <label class="off" for="oy">Y=</label><span class="num"><input id="oy" type="text" value="0"><i></i></span><span class="off unit">mm</span><i class="sep flush"></i>
        <label class="turn"><input type="checkbox">旋转</label>
        <span class="more end">»</span>
      </div>

      <section class="rebar">
        <div class="edge"><svg viewBox="0 0 12 12"><path d="M0 0h12v12H0z" fill="#5a3040"/><path d="M1 3h10v8H1z" fill="#eee"/><path d="M2 3l8 8M10 3l-8 8" stroke="#222" stroke-width="1.500"/></svg><i></i></div>
        <div class="rebar-body">
          <div class="bar">
            <button class="t nav-i" aria-label="首条"><svg class="i"><use href="#first"/></svg></button><button class="t nav-i" aria-label="上一条"><svg class="i"><use href="#prev"/></svg></button><button class="t nav-i" aria-label="下一条"><svg class="i"><use href="#next"/></svg></button><button class="t nav-i" aria-label="末条"><svg class="i"><use href="#last"/></svg></button><i class="sep"></i>
            <button class="t nav-i" aria-label="上移"><svg class="i"><use href="#up"/></svg></button><button class="t nav-i" aria-label="下移"><svg class="i"><use href="#down"/></svg></button><i class="sep"></i>
            <button class="t off"><svg class="i"><use href="#g-ins"/></svg>插入</button>
            <button class="t off"><svg class="i"><use href="#g-rem"/></svg>删除</button>
            <button class="t"><svg class="i"><use href="#scale"/></svg>缩尺配筋</button>
            <button class="t"><svg class="i"><use href="#barinfo"/></svg>钢筋信息</button>
            <button class="t"><svg class="i"><use href="#barlib"/></svg>钢筋图库</button>
            <button class="t"><svg class="i"><use href="#other"/></svg>其他<i class="caret tight"></i></button>
            <button class="t">关闭</button><i class="sep"></i>
            <span class="total">单构件钢筋总重(kg)：69.762</span>
          </div>
          <div class="sheet">
            <div class="clip">
              <table>
                <colgroup><col class="c-n"><col class="c-name"><col class="c-d"><col class="c-g"><col class="c-t"><col><col class="c-f"><col class="c-e"><col class="c-l"><col class="c-q"></colgroup>
                <thead><tr><td></td><th>筋号</th><th>直径<span class="m">(mm)</span></th><th>级别</th><th>图号</th><th>图形</th><th>计算公式</th><th>公式描述</th><th>长度<span class="m">(mm)</span></th><th>根数</th></tr></thead>
                <tbody>
                  <tr class="tall"><th>1</th><td class="name">1跨.上通长筋1</td><td>16</td><td class="c"><svg class="r"><use href="#r3"/></svg></td><td>64</td>
                    <td class="fig"><svg width="250" height="42"><path d="M50 11v18h150V11" class="bar-line"/><text x="24" y="20">240</text><text x="204" y="20">192</text><text x="110" y="20" class="red">5030</text></svg></td>
                    <td>500-30+15*d+4590+192-30</td><td class="cjk">支座宽-保护层+弯折+净长+<br>弯折-保护层</td><td>5462</td><td>2</td></tr>
                  <tr class="active"><th>2*</th><td class="name">1跨.侧面构造筋1</td><td>12</td><td class="c"><svg class="r"><use href="#r1"/></svg></td><td>3</td>
                    <td class="fig"><svg width="250" height="35"><path d="M50 19h-4v5h163v-5h-5" class="bar-line"/><text x="97" y="13" class="red">4740</text></svg></td>
                    <td>15*d+4590-30+12.5*d</td><td class="cjk">锚固+净长-保护层+两倍弯钩</td><td>4890</td><td>2</td></tr>
                  <tr><th>3</th><td class="name">1跨.下通长筋1</td><td>18</td><td class="c"><svg class="r"><use href="#r3"/></svg></td><td>1</td>
                    <td class="fig"><svg width="250" height="35"><path d="M30 23h187" class="bar-line"/><text x="112" y="15" class="red">4830</text></svg></td>
                    <td>15*d+4590-30</td><td class="cjk">锚固+净长-保护层</td><td>4830</td><td>2</td></tr>
                  <tr class="tall"><th>4</th><td class="name">1跨.箍筋1</td><td>8</td><td class="c"><svg class="r"><use href="#r1"/></svg></td><td>195</td>
                    <td class="fig"><svg width="250" height="42"><rect x="103" y="9" width="41" height="26" rx="1" class="bar-line"/><path d="M129 17l9-7M136 23l7-8" class="bar-line"/><text x="70" y="23">740</text><text x="104" y="27" class="red">140</text></svg></td>
                    <td>2*((200-2*30)+(800-2*30))+<br>2*(11.9*d)</td><td></td><td>1950</td><td>30</td></tr>
                  <tr class="tall"><th></th><td class="name"></td><td></td><td></td><td></td><td class="fig"><svg width="250" height="42"><path d="M48 20V8h161v12" class="bar-line"/></svg></td><td></td><td></td><td></td><td></td></tr>
                </tbody>
              </table>
            </div>
            <div class="vscroll"><svg viewBox="0 0 12 8"><path d="M1 7l5-5 5 5"/></svg><i></i><svg viewBox="0 0 12 8"><path d="M1 1l5 5 5-5"/></svg></div>
            <div class="hscroll"><svg viewBox="0 0 8 12"><path d="M7 1L2 6l5 5"/></svg><i></i><svg viewBox="0 0 8 12"><path d="M1 1l5 5-5 5"/></svg></div>
          </div>
        </div>
      </section>
    </main>

    <section class="props">
      <header class="head">属性编辑器<svg class="pin"><use href="#pin"/></svg></header>
      <div class="props-box">
      <table>
        <colgroup><col class="p-n"><col class="p-name"><col></colgroup>
        <thead><tr><td></td><th class="gold">属性名称</th><th>属性值</th></tr></thead>
        <tbody>
          <tr class="cur"><th>1</th><td>名称</td><td>DKL12</td></tr>
          <tr class="b"><th>2</th><td>类别</td><td class="cjk">楼层框架梁</td></tr>
          <tr><th>3</th><td>截面宽度<span class="m">(mm)</span></td><td>200</td></tr>
          <tr><th>4</th><td>截面高度<span class="m">(mm)</span></td><td>800</td></tr>
          <tr><th>5</th><td>轴线距梁左边线距</td><td>(100)</td></tr>
          <tr><th>6</th><td>跨数量</td><td>0A</td></tr>
          <tr class="b"><th>7</th><td>箍筋</td><td><svg class="r"><use href="#r1"/></svg>8@100/200(2)</td></tr>
          <tr class="b"><th>8</th><td>肢数</td><td>2</td></tr>
          <tr class="b"><th>9</th><td>上部通长筋</td><td>2<svg class="r"><use href="#r3"/></svg>16</td></tr>
          <tr class="b"><th>10</th><td>下部通长筋</td><td>2<svg class="r"><use href="#r3"/></svg>18</td></tr>
          <tr class="b"><th>11</th><td>侧面构造或受扭筋</td><td>G2<svg class="r"><use href="#r1"/></svg>12</td></tr>
          <tr class="b"><th>12</th><td>拉筋</td><td>(<svg class="r"><use href="#r1"/></svg>6@250)</td></tr>
          <tr class="b"><th>13</th><td>其它箍筋</td><td></td></tr>
          <tr><th>14</th><td>备注</td><td></td></tr>
          <tr class="g"><th>15</th><td><button>+</button>其它属性</td><td></td></tr>
          <tr class="g"><th>23</th><td><button>+</button>锚固搭接</td><td></td></tr>
          <tr class="g"><th>38</th><td><button>+</button>显示样式</td><td></td></tr>
        </tbody>
      </table>
      </div>
    </section>
  </div>
  <footer class="status"><i></i><i></i><i></i><i></i></footer>
</div>

<div class="dialog" role="dialog" aria-labelledby="dlg">
  <h2 id="dlg">钢筋显示控制面板</h2>
  <div class="checks">
    <label><input type="checkbox">上部通长筋</label>
    <label><input type="checkbox" checked>侧面钢筋</label>
    <label><input type="checkbox" checked>下部通长筋</label>
    <label><input type="checkbox">箍筋</label>
    <label><input type="checkbox">拉筋</label>
    <label><input type="checkbox" checked>显示其它图元</label>
    <label><input type="checkbox" checked>显示详细公式</label>
  </div>
</div>

<svg class="notes" viewBox="0 0 1799 954">
  <rect x="956.500" y="394.500" width="312" height="64" fill="none" stroke="#e04848"/>
  <text x="636" y="545" dominant-baseline="central">为什么是15d+4590-30+12.5d？不应该是4500+15d+15d（净长+2*15d）吗？？？</text>
  <path d="M1088 471l-45 179-32 132 5 3-16 14-4-19 8 1 33-131z" fill="#fb3c3c"/>
  <path d="M1378 366l17-8v5l105 1 62 2-62 2-105 1v5z" fill="#fb3c3c"/>
  <rect x="1538" y="339" width="216" height="21" fill="none" stroke="#e84040" stroke-width="4"/>
</svg>

<div class="ime"><span>英</span><span>简</span></div>
<svg class="mascot" viewBox="0 0 60 66">
  <path d="M29 18l-1-8" stroke="#6b5247" stroke-width="1.500"/><path d="M27 11c-5 1-10-1-10-4 4-2 9-1 10 4zM27 10c-2-5 2-9 6-10 1 5-1 9-6 10z" fill="#b9d98a" stroke="#5e6b3c" stroke-width="1.200"/>
  <path d="M35 13c17 0 27 9 27 21 0 10-6 16-14 19 2 4 3 8 4 13H20c0-5 2-9 4-13C14 50 8 44 8 34c0-12 10-21 27-21z" transform="translate(-6 0)" fill="#fff" stroke="#6b5247" stroke-width="1.500"/>
  <circle cx="25" cy="33" r="3" fill="#5a1f1a"/><circle cx="44" cy="32" r="3" fill="#5a1f1a"/><circle cx="20" cy="37" r="4" fill="#fbc9cc"/><circle cx="50" cy="37" r="4" fill="#fbc9cc"/>
  <path d="M31 34c1 2 3 2 4 0 1 2 3 2 4 0" fill="none" stroke="#5a1f1a"/><path d="M32 36h6l-3 5z" fill="#e8606a" stroke="#5a1f1a" stroke-width=".8"/>
</svg>
<div class="ball"></div>
</body>
</html>
```

FILE: styles.css
```css
* { box-sizing: border-box; }
body {
  margin: 0;
  overflow: hidden;
  background: #f0f0f0;
  color: #111;
  font: 15px/20px "Noto Sans CJK SC", sans-serif;
}
button, input, select { font: inherit; color: inherit; margin: 0; }
ul { list-style: none; margin: 0; padding: 0; }
.sprite { position: absolute; width: 0; height: 0; }
.app { height: 100vh; display: flex; flex-direction: column; overflow: hidden; }

/* menu */
.menu { flex: none; height: 16px; overflow: hidden; background: #f0f0f0; }
.menu-line { display: flex; margin: -12px 0 0 -38px; white-space: nowrap; }
.menu a { color: #222; text-decoration: none; padding: 0 7px; display: flex; gap: 7px; }
.dot { width: 18px; height: 18px; border-radius: 6px; margin-left: 4px; }
.dot.green { background: #3fae2a; }
.dot.blue { background: #2a9be8; }
.dot.sky { background: #3a9cc8; }
.dot.navy { background: #3a68b8; }
.notice { color: #2f7a1e; margin-left: auto; padding: 0 60px 0 32px; background: #f8f8f8; }
.account { display: flex; margin-right: -24px; }

/* toolbars */
.bar {
  flex: none;
  height: 33px;
  display: flex;
  align-items: center;
  background: linear-gradient(#fdfdfd, #f2f2f2);
  white-space: nowrap;
  overflow: hidden;
}
.bar.top { margin-bottom: 4px; }
.bar.fit { align-self: flex-start; padding-right: 4px; }
.t {
  flex: none;
  display: flex;
  align-items: center;
  gap: 5px;
  height: 29px;
  padding: 0 4px;
  border: 1px solid transparent;
  background: none;
}
.close-set .t { gap: 4px; }
.t.on { background: #d9e8f7; border-color: #1979d0; padding: 0 3px; }
.t.white { background: #fff; }
.off { color: #9a9a9a; }
.i { width: 20px; height: 20px; flex: none; }
.caret { width: 12px; display: flex; justify-content: center; }
.caret::before, .combo::after {
  content: "";
  border: 4px solid transparent;
  border-top-color: #111;
  border-bottom: 0;
}
.off .caret::before { border-top-color: #888; }
.caret.tight { margin-left: -5px; }
.sep { flex: none; width: 1px; height: 26px; background: #c4c4c4; margin-left: 4px; }
.sep.wide { margin: 0 3px 0 5px; }
.sep.flush { margin-left: 2px; }
.grip {
  flex: none;
  width: 3px;
  height: 20px;
  margin: 0 2px 0 5px;
  background: repeating-linear-gradient(#aaa 0 2px, transparent 2px 5px);
}
.more { font: 700 19px/18px "Noto Sans", sans-serif; align-self: flex-start; }
.more.lead { margin: 0 6px 0 16px; }
.more.mid { margin: 0 6px 0 16px; }
.more.end { margin-left: auto; padding-right: 4px; }
.more.far { margin-left: 52px; padding-right: 4px; }
.save { flex: none; width: 3px; height: 17px; background: #3b3f9c; margin-right: 5px; }
.undo { margin-left: 3px; }

.combo { position: relative; flex: none; width: 87px; height: 29px; margin-right: 3px; }
.combo.short { width: 72px; }
.combo::after { position: absolute; right: 5px; top: 13px; pointer-events: none; }
.combo select {
  appearance: none;
  width: 100%;
  height: 100%;
  border: 0;
  padding: 0 16px 2px 4px;
  background: linear-gradient(90deg, #fff calc(100% - 16px), #f6f6f6 0);
}

/* workspace */
.work {
  flex: 1;
  min-height: 0;
  display: grid;
  grid-template-columns: 145px 253px minmax(0, 1fr) 303px;
  grid-template-rows: minmax(0, 1fr);
}
.work > * { min-width: 0; min-height: 0; }
.comp { margin-left: 5px; margin-right: -5px; }
.center { margin: 0 4px 0 9px; }

.head {
  display: flex;
  align-items: center;
  height: 19px;
  font-size: 16px;
  border: 1px solid #8f8f8f;
  border-left: 0;
  background: #eee;
}
.pin { width: 12px; height: 14px; margin-left: auto; }
.close { width: 12px; height: 12px; margin: 0 5px 0 12px; }

/* module navigation, partly scrolled off the left edge */
.nav { margin-left: -36px; display: flex; flex-direction: column; }
.nav-head { height: 19px; background: #0a50e0; color: #fff; display: flex; align-items: center; margin-bottom: 1px; flex: none; }
.nav-btn {
  flex: none;
  height: 28px;
  margin-right: 2px;
  padding: 0 0 0 31px;
  text-align: left;
  border: 1px solid #a8a8a8;
  border-top-color: #d0d0d0;
  background: #eee;
}
.nav-btn.deep { padding-left: 23px; }
.nav-strip { flex: none; height: 34px; background: linear-gradient(#fdfdfd, #f0f0f0); }
.nav-list { flex: 1; min-height: 0; overflow: hidden; margin-right: 3px; padding-top: 2px; background: #fff; border: 1px solid #888; }
.nav-list li { height: 20px; padding-left: 22px; white-space: nowrap; }
.nav-list .in1 { padding-left: 29px; }
.nav-list .hot { background: #e2e2e2; }
.book { width: 19px; height: 19px; vertical-align: top; margin-left: 2px; }
.new { font: 700 11px/12px "DejaVu Sans", sans-serif; vertical-align: top; background: #ffe11a; margin-left: 2px; }

/* component list */
.comp { display: flex; flex-direction: column; }
.comp .head { flex: none; }
.comp-bar { flex: none; display: flex; align-items: center; height: 36px; background: linear-gradient(#fdfdfd, #f0f0f0); }
.t.icon { padding: 0 4px 0 5px; }
.find { flex: none; display: flex; height: 31px; padding-left: 1px; }
.find input { flex: 1; min-width: 0; border: 1px solid #777; background: #fff; padding: 0 2px 4px; outline: 0; }
.find input::placeholder { color: #777; opacity: 1; }
.find button { width: 31px; border: 0; background: #f4f4f4; padding: 4px 0 0 4px; }
.tree { flex: 1; min-height: 0; overflow: hidden; margin-left: 1px; padding-top: 2px; background: #fff; border: 1px solid #888; font: 13px/20px "Liberation Mono", monospace; }
.root { display: flex; align-items: center; height: 20px; padding-left: 8px; font: 15px/20px "Noto Sans CJK SC", sans-serif; }
.chev { width: 12px; height: 8px; }
.stub { width: 5px; margin: 0 1px 0 4px; border-top: 1px dotted #888; }
.i16 { width: 17px; height: 17px; margin-right: 7px; }
.tree ul { margin-left: 38px; border-left: 1px dotted #888; }
.tree li { display: flex; align-items: center; height: 20px; }
.tree li::before { content: ""; width: 11px; border-top: 1px dotted #888; }
.tree li span { display: flex; align-items: center; gap: 9px; padding: 0 2px 0 4px; }
.tree li svg { width: 14px; height: 14px; }
.tree .sel span { background: #2f69c4; }

/* centre column */
.center { display: flex; flex-direction: column; gap: 2px; }
.view { flex: 1; min-height: 0; background: #000; }
.view svg { display: block; width: 100%; height: 100%; }
.view text { dominant-baseline: central; }
.axis { fill: #ddd; font: 700 17px "Liberation Sans", sans-serif; text-anchor: middle; }
.dim { fill: #ddd; font: 21px "Noto Sans", sans-serif; }
.desc { fill: #0a6e14; font: 24px "Noto Sans CJK SC", sans-serif; }
.formula { fill: #0a6e14; font: 20px "DejaVu Sans Mono", monospace; }
.formula.small { font-size: 17px; }

.bar.snap { height: 36px; margin-top: -1px; }
.num { display: flex; width: 72px; height: 28px; border: 1px solid #8a8a8a; align-items: center; margin: 0 2px 0 4px; color: #8a8a8a; }
.num input { width: 48px; border: 0; background: none; text-align: right; padding: 0; }
.num i { width: 8px; height: 20px; margin-left: 10px; position: relative; }
.num i::before, .num i::after { content: ""; position: absolute; left: 0; border: 3px solid transparent; }
.num i::before { top: 0; border-bottom: 4px solid #777; border-top: 0; }
.num i::after { bottom: 0; border-top: 4px solid #777; border-bottom: 0; }
.unit { margin-right: 6px; }
.sep + label.off { margin-left: 2px; }
.turn { display: flex; align-items: center; gap: 10px; margin-left: 5px; }
.turn input, .checks input {
  appearance: none;
  width: 14px;
  height: 14px;
  border: 1px solid #999;
  background: #fff;
}

/* rebar editor */
.rebar { flex: none; display: flex; height: 251px; margin-bottom: 1px; }
.edge { width: 16px; padding-top: 5px; display: flex; flex-direction: column; align-items: center; gap: 4px; }
.edge svg { width: 12px; height: 12px; flex: none; }
.edge i { flex: 1; width: 8px; background: radial-gradient(circle, #b4b4b4 1px, transparent 2px) 0 0 / 4px 6px; }
.rebar-body { flex: 1; min-width: 0; display: flex; flex-direction: column; }
.rebar-body .bar { height: 38px; }
.t.nav-i { padding: 0 4px; }
.total { margin-left: 6px; }
.sheet {
  flex: 1;
  min-height: 0;
  display: grid;
  grid-template: minmax(0, 1fr) 20px / minmax(0, 1fr) 22px;
  border: 1px solid #9a9a9a;
  background: #f0f0f0;
}
.clip { overflow: hidden; min-height: 0; }
table { border-collapse: collapse; table-layout: fixed; }
.clip table { width: calc(100% + 20px); font: 13px/15px "Liberation Mono", "Noto Sans CJK SC", monospace; }
.c-n { width: 41px; } .c-name { width: 91px; } .c-d { width: 70px; } .c-g { width: 45px; } .c-t { width: 41px; }
.c-f { width: 208px; } .c-e { width: 195px; } .c-l { width: 76px; } .c-q { width: 46px; }
.clip td, .clip th { border: 1px solid #b4bcb4; padding: 0 0 0 2px; text-align: left; background: #ccffdc; }
.clip thead td, .clip tbody th { background: #f7f7f7; font-weight: 400; text-align: center; padding: 0; border-color: #ccc; }
.clip thead tr { height: 24px; }
.clip thead th { font: 15px/20px "Noto Sans CJK SC", sans-serif; color: #701848; text-align: center; padding: 0; background: linear-gradient(#fbd79c, #f2bf62); }
.m { font: 13px "Liberation Mono", monospace; }
.clip tbody tr { height: 36px; }
.clip tbody tr.tall { height: 43px; }
.clip .name, .clip .cjk { font: 15px/15px "Noto Sans CJK SC", sans-serif; }
.clip td.name { border-right: 2px solid #000; padding-right: 10px; }
.clip .c { text-align: center; }
.clip .active td { background: #8fd6d8; }
.clip .active .name { background: #a8ead8; }
.clip tbody .active th { background: #ffd48a; color: #701848; }
.clip td.fig { padding: 0; }
.fig svg { display: block; }
.fig text { font: 13px "Liberation Mono", monospace; dominant-baseline: central; }
.fig .red { fill: #f01010; }
.bar-line { fill: none; stroke: #000; stroke-width: 2; }
.r { width: 12px; height: 12px; vertical-align: -2px; color: #111; margin: 0 2px; }
.vscroll { display: flex; flex-direction: column; align-items: center; padding: 9px 2px 8px 0; }
.vscroll svg, .hscroll svg { fill: none; stroke: #555; stroke-width: 2; }
.vscroll svg { width: 12px; height: 8px; }
.vscroll i { width: 18px; height: 63px; margin: 4px 0 auto; background: #cdcdcd; }
.hscroll { display: flex; align-items: center; padding: 0 6px 0 7px; }
.hscroll svg { width: 8px; height: 12px; }
.hscroll i { width: 37%; height: 18px; margin: 0 auto 0 7px; background: #cdcdcd; }

/* property editor */
.props { overflow: hidden; display: flex; flex-direction: column; }
.props .head { flex: none; border-width: 1px 0; }
.props .pin { margin-right: 3px; }
.props-box { flex: 1; min-height: 0; background: #fff; border: 1px solid #999; border-width: 1px 0 1px 1px; margin-top: 2px; overflow: hidden; }
.props table { width: calc(100% + 19px); height: 434px; font: 13px/18px "Liberation Mono", monospace; color: #888; }
.p-n { width: 26px; } .p-name { width: 152px; }
.props td, .props th { border: 1px solid #bcbcbc; padding: 0 0 0 2px; text-align: left; white-space: nowrap; }
.props thead tr { height: 29px; }
.props thead th { text-align: center; font: 15px/20px "Noto Sans CJK SC", sans-serif; color: #222; background: linear-gradient(#fff, #eee); }
.props thead .gold { color: #701848; background: linear-gradient(#fbd79c, #f2bf62); }
.props tbody th { text-align: center; font: 13px/18px "Noto Sans", sans-serif; color: #222; background: #f4f4f4; padding: 0; }
.props tbody td:nth-child(2) { padding-left: 25px; font: 15px/18px "Noto Sans CJK SC", sans-serif; color: #111; }
.props .cjk { font: 15px/18px "Noto Sans CJK SC", sans-serif; }
.props tbody .b td:nth-child(2) { color: #1414e0; }
.props tbody .g td:nth-child(2) { color: #888; padding-left: 3px; }
.props tbody .cur th { background: #ffd48a; color: #701848; }
.props tbody .cur td:nth-child(2) { background: #0078d7; color: #fff; }
.props button { width: 15px; height: 15px; padding: 0; margin-right: 7px; border: 1px solid #bbb; background: #fff; color: #111; font: 700 14px/12px "Liberation Sans", sans-serif; vertical-align: 1px; }

.status { flex: none; height: 4px; padding-top: 2px; display: flex; gap: 3px; }
.status i { flex: 1; border-top: 1px solid #c0c0c0; }

/* floating panel */
.dialog {
  position: absolute;
  left: 20px;
  top: 368px;
  width: 209px;
  padding: 0 2px 2px;
  background: #fff;
  border: 1px solid #aaa;
  box-shadow: 1px 2px 8px rgba(0, 0, 0, .45);
}
.dialog h2 { margin: 0; padding: 8px 7px 10px; font: 15px/20px "Noto Sans CJK SC", sans-serif; color: #888; }
.checks { height: 182px; border: 1px solid #888; padding: 2px 0 0 2px; }
.checks label { display: flex; align-items: center; gap: 5px; height: 15px; line-height: 15px; }
.checks input { display: grid; place-items: center; }
.checks input:checked::before { content: ""; width: 8px; height: 5px; border: solid #444; border-width: 0 0 2px 2px; transform: rotate(-45deg); }

/* annotations */
.notes { position: absolute; left: 0; top: 0; width: 1799px; height: 954px; pointer-events: none; }
.notes text { fill: #e84848; font: 500 20px "Noto Sans", "Noto Sans CJK SC", sans-serif; }

/* input-method widget */
.ime { position: absolute; right: 112px; bottom: 0; width: 85px; height: 31px; display: flex; gap: 9px; padding: 6px 0 0 6px; border-radius: 8px 0 0 0; border: 1px dashed #e08a92; background: #ffb9c0; font: 700 20px/24px "Noto Sans CJK SC", sans-serif; color: #5c4f3c; overflow: hidden; }
.mascot { position: absolute; right: 76px; bottom: -5px; width: 60px; height: 66px; }
.ball { position: absolute; right: -67px; bottom: -15px; width: 82px; height: 82px; border-radius: 50%; background: #7ed321; border: 8px solid #1f56c0; }
```
